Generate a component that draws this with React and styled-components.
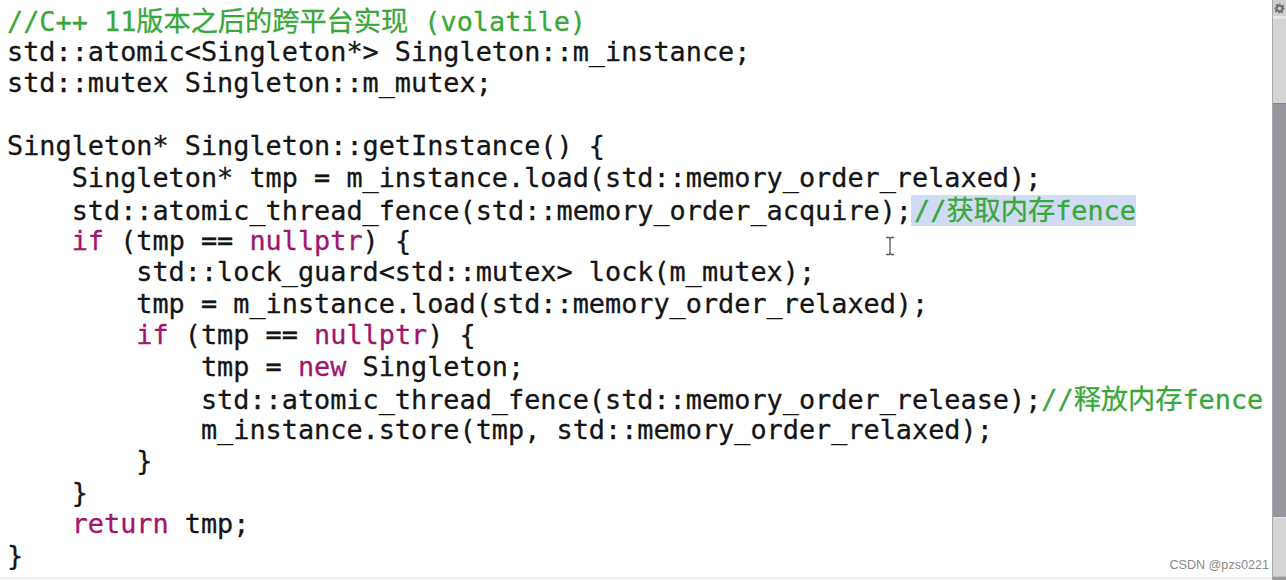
import React from 'react';
import styled, {createGlobalStyle} from "styled-components";

const Global = createGlobalStyle`
  html, body {
    margin: 0;
    padding: 0;
    background: #ffffff;
    overflow: hidden;
  }
`

const Page = styled.div`
  width: 1286px;
  height: 580px;
  display: grid;
  grid-template-columns: 1272px 14px;
  background: #ffffff;
`

const Editor = styled.div`
  position: relative;
  overflow: hidden;
  padding: 4px 0 0 7px;
  border-bottom: 3px solid #efefef;
  box-sizing: border-box;
`

const Code = styled.pre`
  margin: 0;
  font-family: "DejaVu Sans Mono", "Noto Sans CJK SC", monospace;
  font-size: 26.85px;
  line-height: 31.53px;
  color: #151515;
  white-space: pre;
  -webkit-text-stroke: 0.3px currentColor;
`

const Line = styled.div`
  height: 31.53px;
`

const Tok = styled.span`
  color: ${p => p.$kind === 'kw' ? '#a0166a' : p.$kind === 'cm' ? '#3aa73a' : '#151515'};
  background: ${p => p.$hl ? '#cfdcf3' : 'transparent'};
  padding-left: ${p => p.$hl ? '3px' : '0'};
  margin-left: ${p => p.$hl ? '-1px' : '0'};
`

const Cjk = styled.span`
  font-family: "Noto Sans CJK SC", sans-serif;
  font-size: 27.2px;
`

const Cursor = styled.svg`
  position: absolute;
  left: 884px;
  top: 236px;
`

const Watermark = styled.div`
  position: absolute;
  right: 3px;
  bottom: 5px;
  font-family: "Liberation Sans", Arial, sans-serif;
  font-size: 12.6px;
  color: #8a8a8a;
`

const Scrollbar = styled.div`
  width: 14px;
  height: 580px;
  box-sizing: border-box;
  display: flex;
  flex-direction: column;
  border-left: 1px solid #a8a8a8;
  background: #d2d2d2;
`

const GearBox = styled.div`
  height: 16px;
  flex-shrink: 0;
  display: flex;
  align-items: center;
  justify-content: center;
  background: #cfcfcf;
  border-bottom: 2px solid #e8e8e8;
`

const Track = styled.div`
  height: ${p => p.$h}px;
  flex-shrink: 0;
  background: ${p => p.$dark ? '#96969c' : '#d4d4d4'};
  border-top: 1px solid ${p => p.$dark ? '#85858b' : '#e2e2e2'};
`

const BottomBox = styled.div`
  flex: 1;
  background: #9a9a9a;
  border-top: 1px solid #c0c0c0;
`

// split text so CJK chars get the CJK font
const renderText = (s) => {
    const parts = s.split(/([\u4e00-\u9fff]+)/);
    return parts.map((p, i) => /[\u4e00-\u9fff]/.test(p) ? <Cjk key={i}>{p}</Cjk> : p);
};

const lines = [
    [['//C++ 11版本之后的跨平台实现 (volatile)', 'cm']],
    [['std::atomic<Singleton*> Singleton::m_instance;']],
    [['std::mutex Singleton::m_mutex;']],
    [],
    [['Singleton* Singleton::getInstance() {']],
    [['    Singleton* tmp = m_instance.load(std::memory_order_relaxed);']],
    [['    std::atomic_thread_fence(std::memory_order_acquire);'], ['//获取内存fence', 'cm', true]],
    [['    '], ['if', 'kw'], [' (tmp == '], ['nullptr', 'kw'], [') {']],
    [['        std::lock_guard<std::mutex> lock(m_mutex);']],
    [['        tmp = m_instance.load(std::memory_order_relaxed);']],
    [['        '], ['if', 'kw'], [' (tmp == '], ['nullptr', 'kw'], [') {']],
    [['            tmp = '], ['new', 'kw'], [' Singleton;']],
    [['            std::atomic_thread_fence(std::memory_order_release);'], ['//释放内存fence', 'cm']],
    [['            m_instance.store(tmp, std::memory_order_relaxed);']],
    [['        }']],
    [['    }']],
    [['    '], ['return', 'kw'], [' tmp;']],
    [['}']],
];

const Gear = () => (
    <svg width="11" height="11" viewBox="0 0 24 24" fill="#707070">
        <path d="M10 1h4l.6 3.2 2.2 1 2.7-1.9 2.8 2.8-1.9 2.7 1 2.2L23 10v4l-3.2.6-1 2.2 1.9 2.7-2.8 2.8-2.7-1.9-2.2 1L14 23h-4l-.6-3.2-2.2-1-2.7 1.9-2.8-2.8 1.9-2.7-1-2.2L1 14v-4l3.2-.6 1-2.2-1.9-2.7 2.8-2.8 2.7 1.9 2.2-1zM12 8a4 4 0 1 0 0 8 4 4 0 0 0 0-8z"/>
    </svg>
);

const App = () => {
    return (
        <Page>
            <Global/>
            <Editor>
                <Code>
                    {lines.map((toks, i) => (
                        <Line key={i}>
                            {toks.map(([t, kind, hl], j) => (
                                <Tok key={j} $kind={kind} $hl={hl}>{renderText(t)}</Tok>
                            ))}
                        </Line>
                    ))}
                </Code>
                <Cursor width="12" height="20" viewBox="0 0 12 20">
                    <path d="M2 1.5h3l1 1 1-1h3M6 2.5v15M2 18.5h3l1-1 1 1h3" stroke="#555" strokeWidth="1.3" fill="none"/>
                </Cursor>
                <Watermark>CSDN @pzs0221</Watermark>
            </Editor>
            <Scrollbar>
                <GearBox><Gear/></GearBox>
                <Track $h={84}/>
                <Track $dark $h={413}/>
                <Track $h={58}/>
                <BottomBox/>
            </Scrollbar>
        </Page>
    );
};

export default App;
